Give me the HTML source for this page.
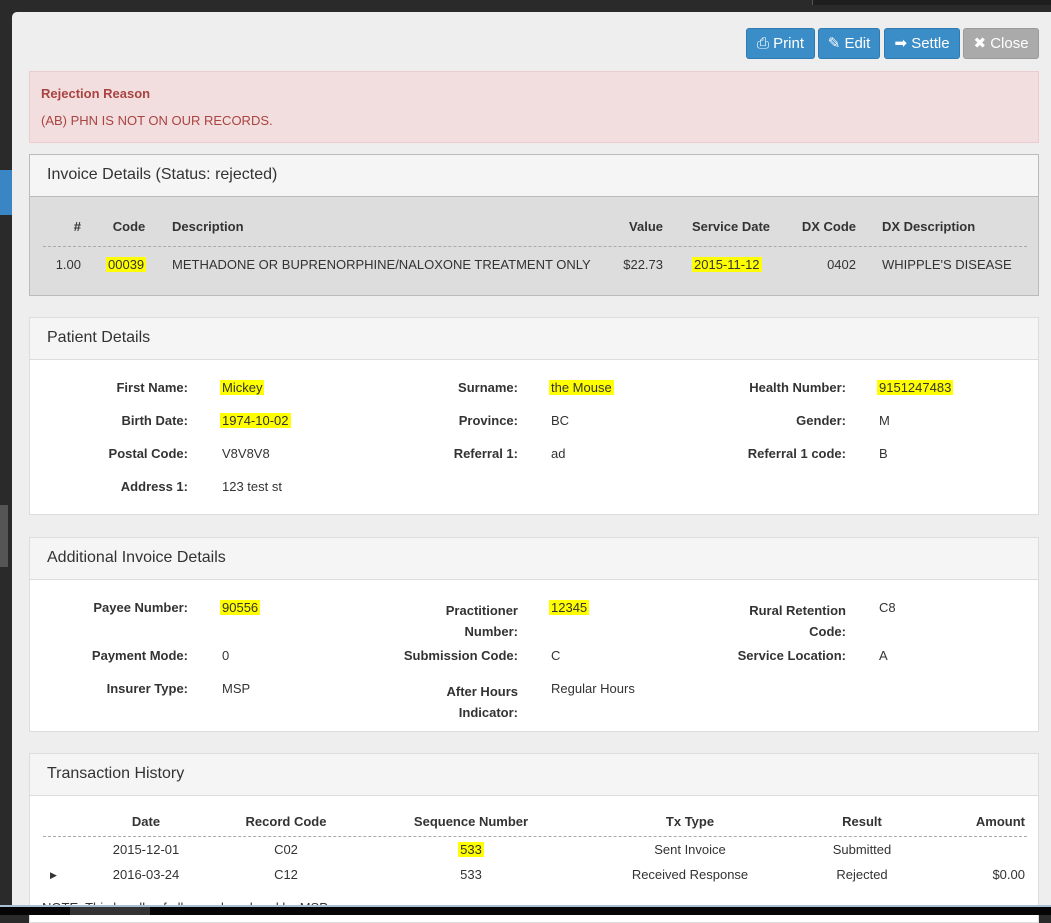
<!DOCTYPE html>
<html><head><meta charset="utf-8">
<style>
*{box-sizing:border-box;margin:0;padding:0}
body{width:1051px;height:915px;background:#2a2a2a;font-family:"Liberation Sans",sans-serif;font-size:13px;color:#333;position:relative;overflow:hidden}
.a{position:absolute;white-space:nowrap;line-height:16px}
.r{text-align:right}
.c{text-align:center}
.b{font-weight:bold}
.hl{background:#ffff00;padding:0 2px}
.modal{position:absolute;left:12px;top:12px;width:1045px;height:893px;background:#eee;border-radius:5px 0 0 0}
.btn{position:absolute;top:28px;height:31px;background:#3b8dc8;border:1px solid #2f7bb2;border-radius:3px;color:#fff;font-size:15px;line-height:29px;text-align:center}
.panel{position:absolute;left:29px;width:1010px;border:1px solid #ddd;background:#fff}
.ph{height:42px;background:#f5f5f5;border-bottom:1px solid #ddd;font-size:16px;line-height:40px;padding-left:17px;color:#333}
.dash{position:absolute;border-top:1px dashed #aaa;height:0}
</style></head><body>
<div class="a" style="left:0;top:170px;width:12px;height:45px;background:#3a86c4"></div>
<div class="a" style="left:0;top:505px;width:8px;height:62px;background:#555"></div>
<div class="a" style="left:812px;top:0;width:239px;height:5px;background:#1e1e1e;border-left:1px solid #555"></div>
<div class="modal"></div>

<div class="btn" style="left:746px;width:69px">&#9113; Print</div>
<div class="btn" style="left:818px;width:62px">&#9998; Edit</div>
<div class="btn" style="left:884px;width:76px">&#10145; Settle</div>
<div class="btn" style="left:963px;width:76px;background:#aaa;border-color:#9a9a9a">&#10006; Close</div>

<div class="a" style="left:29px;top:71px;width:1010px;height:72px;background:#f2dede;border:1px solid #ebccd1"></div>
<div class="a b" style="left:41px;top:86px;color:#a94442">Rejection Reason</div>
<div class="a" style="left:41px;top:113px;color:#a94442">(AB) PHN IS NOT ON OUR RECORDS.</div>

<!-- Invoice details -->
<div class="panel" style="top:154px;height:142px;background:#ddd;border-color:#bbb"><div class="ph" style="border-color:#bbb">Invoice Details (Status: rejected)</div></div>
<div class="a b r" style="left:40px;top:219px;width:41px">#</div>
<div class="a b c" style="left:100px;top:219px;width:58px">Code</div>
<div class="a b" style="left:172px;top:219px">Description</div>
<div class="a b r" style="left:600px;top:219px;width:63px">Value</div>
<div class="a b c" style="left:680px;top:219px;width:102px">Service Date</div>
<div class="a b r" style="left:790px;top:219px;width:66px">DX Code</div>
<div class="a b" style="left:882px;top:219px">DX Description</div>
<div class="dash" style="left:43px;top:246px;width:984px"></div>
<div class="a r" style="left:40px;top:257px;width:41px">1.00</div>
<div class="a" style="left:106px;top:257px"><span class="hl">00039</span></div>
<div class="a" style="left:172px;top:257px">METHADONE OR BUPRENORPHINE/NALOXONE TREATMENT ONLY</div>
<div class="a r" style="left:600px;top:257px;width:63px">$22.73</div>
<div class="a" style="left:692px;top:257px"><span class="hl">2015-11-12</span></div>
<div class="a r" style="left:790px;top:257px;width:66px">0402</div>
<div class="a" style="left:882px;top:257px">WHIPPLE'S DISEASE</div>

<!-- Patient -->
<div class="panel" style="top:317px;height:198px"><div class="ph">Patient Details</div></div>
<div class="a b r" style="left:40px;top:380px;width:148px">First Name:</div>
<div class="a" style="left:220px;top:380px"><span class="hl">Mickey</span></div>
<div class="a b r" style="left:370px;top:380px;width:148px">Surname:</div>
<div class="a" style="left:549px;top:380px"><span class="hl">the Mouse</span></div>
<div class="a b r" style="left:700px;top:380px;width:146px">Health Number:</div>
<div class="a" style="left:877px;top:380px"><span class="hl">9151247483</span></div>

<div class="a b r" style="left:40px;top:413px;width:148px">Birth Date:</div>
<div class="a" style="left:220px;top:413px"><span class="hl">1974-10-02</span></div>
<div class="a b r" style="left:370px;top:413px;width:148px">Province:</div>
<div class="a" style="left:551px;top:413px">BC</div>
<div class="a b r" style="left:700px;top:413px;width:146px">Gender:</div>
<div class="a" style="left:879px;top:413px">M</div>

<div class="a b r" style="left:40px;top:446px;width:148px">Postal Code:</div>
<div class="a" style="left:222px;top:446px">V8V8V8</div>
<div class="a b r" style="left:370px;top:446px;width:148px">Referral 1:</div>
<div class="a" style="left:551px;top:446px">ad</div>
<div class="a b r" style="left:700px;top:446px;width:146px">Referral 1 code:</div>
<div class="a" style="left:879px;top:446px">B</div>

<div class="a b r" style="left:40px;top:479px;width:148px">Address 1:</div>
<div class="a" style="left:222px;top:479px">123 test st</div>

<!-- Additional -->
<div class="panel" style="top:537px;height:195px"><div class="ph">Additional Invoice Details</div></div>
<div class="a b r" style="left:40px;top:600px;width:148px">Payee Number:</div>
<div class="a" style="left:220px;top:600px"><span class="hl">90556</span></div>
<div class="a b r" style="left:370px;top:600px;width:148px;line-height:21px;white-space:normal">Practitioner<br>Number:</div>
<div class="a" style="left:549px;top:600px"><span class="hl">12345</span></div>
<div class="a b r" style="left:700px;top:600px;width:146px;line-height:21px">Rural Retention<br>Code:</div>
<div class="a" style="left:879px;top:600px">C8</div>

<div class="a b r" style="left:40px;top:648px;width:148px">Payment Mode:</div>
<div class="a" style="left:222px;top:648px">0</div>
<div class="a b r" style="left:370px;top:648px;width:148px">Submission Code:</div>
<div class="a" style="left:551px;top:648px">C</div>
<div class="a b r" style="left:700px;top:648px;width:146px">Service Location:</div>
<div class="a" style="left:879px;top:648px">A</div>

<div class="a b r" style="left:40px;top:681px;width:148px">Insurer Type:</div>
<div class="a" style="left:222px;top:681px">MSP</div>
<div class="a b r" style="left:370px;top:681px;width:148px;line-height:21px">After Hours<br>Indicator:</div>
<div class="a" style="left:551px;top:681px">Regular Hours</div>

<!-- Transactions -->
<div class="panel" style="top:753px;height:170px"><div class="ph">Transaction History</div></div>
<div class="a b c" style="left:96px;top:814px;width:100px">Date</div>
<div class="a b c" style="left:226px;top:814px;width:120px">Record Code</div>
<div class="a b c" style="left:391px;top:814px;width:160px">Sequence Number</div>
<div class="a b c" style="left:630px;top:814px;width:120px">Tx Type</div>
<div class="a b c" style="left:812px;top:814px;width:100px">Result</div>
<div class="a b r" style="left:925px;top:814px;width:100px">Amount</div>
<div class="dash" style="left:43px;top:836px;width:984px"></div>
<div class="a c" style="left:96px;top:842px;width:100px">2015-12-01</div>
<div class="a c" style="left:226px;top:842px;width:120px">C02</div>
<div class="a c" style="left:391px;top:842px;width:160px"><span class="hl">533</span></div>
<div class="a c" style="left:630px;top:842px;width:120px">Sent Invoice</div>
<div class="a c" style="left:812px;top:842px;width:100px">Submitted</div>
<div class="a" style="left:50px;top:867px;font-size:9px">&#9654;</div>
<div class="a c" style="left:96px;top:867px;width:100px">2016-03-24</div>
<div class="a c" style="left:226px;top:867px;width:120px">C12</div>
<div class="a c" style="left:391px;top:867px;width:160px">533</div>
<div class="a c" style="left:610px;top:867px;width:160px">Received Response</div>
<div class="a c" style="left:812px;top:867px;width:100px">Rejected</div>
<div class="a r" style="left:925px;top:867px;width:100px">$0.00</div>
<div class="a" style="left:42px;top:900px">NOTE: This bundle of all records ordered by MSP</div>

<div class="a" style="left:0;top:905px;width:1051px;height:10px;background:#050505;border-top:2px solid #a9bfd6"></div>
<div class="a" style="left:70px;top:907px;width:80px;height:8px;background:#333"></div>
</body></html>
